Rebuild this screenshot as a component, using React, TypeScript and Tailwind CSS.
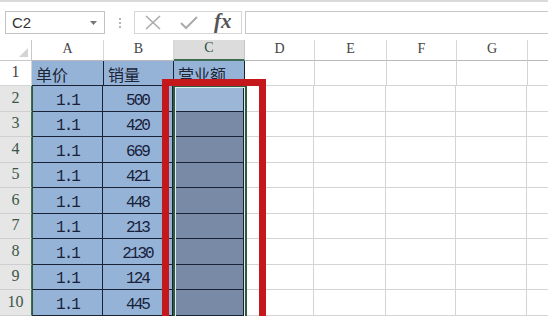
import React from "react";

const cols = [
  { k: "A", w: 72 },
  { k: "B", w: 70 },
  { k: "C", w: 71 },
  { k: "D", w: 70 },
  { k: "E", w: 72 },
  { k: "F", w: 70 },
  { k: "G", w: 71 },
  { k: "", w: 60 },
];

const data: [string, string][] = [
  ["1.1", "500"],
  ["1.1", "420"],
  ["1.1", "669"],
  ["1.1", "421"],
  ["1.1", "448"],
  ["1.1", "213"],
  ["1.1", "2130"],
  ["1.1", "124"],
  ["1.1", "445"],
];

const mono = { fontFamily: '"Liberation Mono", monospace' } as const;
const serif = { fontFamily: '"Liberation Serif", "DejaVu Serif", serif' } as const;
const cjk = { fontFamily: '"Noto Sans CJK SC", "Noto Sans", sans-serif' } as const;

function RowHeader({ n, h, sel }: { n: number; h: number; sel: boolean }) {
  return (
    <div
      className={`w-[32px] shrink-0 flex items-end justify-center pb-[1px] border-b text-[16px] ${
        sel
          ? "bg-[#e6e6e6] border-b-[#cfcfcf] border-r border-r-[#3a6e50] text-[#3a5646]"
          : "bg-white border-b-[#d4d4d4] border-r border-r-[#d4d4d4] text-[#444]"
      }`}
      style={{ ...serif, height: h }}
    >
      {n}
    </div>
  );
}

export default function App() {
  return (
    <div className="relative w-[548px] h-[316px] overflow-hidden bg-white">
      {/* Formula bar */}
      <div className="h-[40px] border-t-2 border-[#dadada] flex items-start pt-[9px]">
        <div className="ml-[5px] w-[100px] h-[23px] border border-[#c3c3c3] flex items-center justify-between pl-[6px] pr-[7px]">
          <span className="text-[15px] text-[#333] leading-none" style={{ fontFamily: '"Liberation Sans", Arial, sans-serif' }}>
            C2
          </span>
          <svg width="7" height="4" viewBox="0 0 7 4">
            <path d="M0 0 L7 0 L3.5 4 Z" fill="#777" />
          </svg>
        </div>
        <div className="w-[29px] h-[23px] flex flex-col items-center justify-center gap-[2px]">
          <div className="w-[2px] h-[2px] bg-[#b5b5b5]" />
          <div className="w-[2px] h-[2px] bg-[#b5b5b5]" />
          <div className="w-[2px] h-[2px] bg-[#b5b5b5]" />
        </div>
        <div className="w-[108px] h-[23px] border border-[#d6d6d6] flex items-center">
          <svg className="ml-[10px]" width="16" height="15" viewBox="0 0 16 15">
            <path d="M1 1 L15 14 M15 1 L1 14" stroke="#ababab" strokeWidth="1.6" />
          </svg>
          <svg className="ml-[19px]" width="18" height="15" viewBox="0 0 18 15">
            <path d="M1 8 L6 13 L17 2" stroke="#ababab" strokeWidth="2" fill="none" />
          </svg>
          <span
            className="ml-[16px] text-[21px] italic font-bold text-[#555] leading-none -mt-[2px]"
            style={serif}
          >
            fx
          </span>
        </div>
        <div className="ml-[3px] flex-1 h-[23px] border border-[#c6c6c6] border-r-0" />
      </div>

      {/* Column headers */}
      <div className="flex h-[21px]">
        <div className="w-[32px] shrink-0 relative border-b border-r border-[#c8c8c8] bg-white">
          <svg className="absolute right-[3px] bottom-[3px]" width="9" height="9" viewBox="0 0 9 9">
            <path d="M9 0 L9 9 L0 9 Z" fill="#d4d4d4" />
          </svg>
        </div>
        {cols.map((c, i) => (
          <div
            key={i}
            className={`shrink-0 flex items-end justify-center pb-[1px] text-[14px] border-r ${
              c.k === "C"
                ? "bg-[#dcdcdc] border-r-[#c5c5c5] border-b-2 border-b-[#3d6e54] text-[#2f4f3d]"
                : "bg-white border-r-[#d6d6d6] border-b border-b-[#b9b9b9] text-[#444]"
            }`}
            style={{ ...serif, width: c.w }}
          >
            {c.k}
          </div>
        ))}
      </div>

      {/* Row 1 */}
      <div className="flex">
        <RowHeader n={1} h={25} sel={false} />
        {cols.map((c, i) => {
          const label = ["单价", "销量", "营业额"][i];
          const inData = i < 3;
          return (
            <div
              key={i}
              className={`shrink-0 flex items-center pl-[4px] pt-[2px] text-[16px] text-[#1c2436] border-r border-b ${
                inData ? "bg-[#95b3d7] border-[#1a2235]" : "bg-white border-[#d4d4d4]"
              }`}
              style={{ ...cjk, width: c.w, height: 25 }}
            >
              {label}
            </div>
          );
        })}
      </div>

      {/* Data rows */}
      {data.map(([a, b], r) => {
        const h = r % 2 === 0 ? 26 : 25;
        return (
          <div key={r} className="flex">
            <RowHeader n={r + 2} h={h} sel={true} />
            {cols.map((c, i) => {
              let cls = "bg-white border-[#d4d4d4]";
              let txt = "";
              if (i === 0) {
                cls = "bg-[#95b3d7] border-[#1a2235] border-l border-l-[#2c5a40]";
                txt = a;
              } else if (i === 1) {
                cls = "bg-[#95b3d7] border-[#1a2235]";
                txt = b;
              } else if (i === 2) {
                cls = r === 0 ? "bg-[#9cb6d8] border-[#1a2235]" : "bg-[#788aa6] border-[#1a2235]";
              }
              return (
                <div
                  key={i}
                  className={`shrink-0 flex items-center justify-center pt-[4px] text-[16px] tracking-[-2px] text-[#18213a] border-r border-b ${cls}`}
                  style={{ ...mono, width: i === 0 ? c.w - 1 : c.w, height: h }}
                >
                  {txt}
                </div>
              );
            })}
          </div>
        );
      })}

      {/* Selection border C2:C10 */}
      <div className="absolute left-[173px] top-[85px] w-[74px] h-[240px] border-2 border-[#2d5c43]">
        <div className="w-full h-full border border-[#e4ece6]" />
      </div>

      {/* Red highlight rectangle */}
      <div className="absolute left-[162px] top-[79px] w-[104px] h-[260px] border-[7px] border-[#c4181d]" />
    </div>
  );
}
